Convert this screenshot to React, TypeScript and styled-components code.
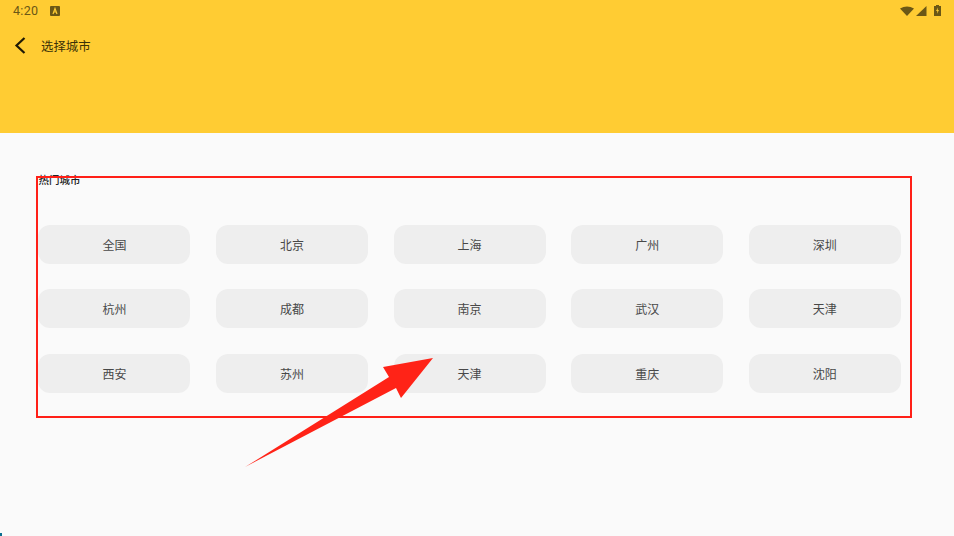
import React from "react";
import styled, { createGlobalStyle } from "styled-components";

const GlobalStyle = createGlobalStyle`
  html, body {
    margin: 0;
    padding: 0;
    background-color: #fafafa;
    font-family: "Noto Sans CJK SC", "Roboto", sans-serif;
  }
`;

const StyledPage = styled("div")`
  position: relative;
  width: 954px;
  height: 536px;
  overflow: hidden;
  background-color: #fafafa;
`;
const StyledHeader = styled("header")`
  height: 133px;
  background-color: #ffcc33;
`;
const StyledStatusBar = styled("div")`
  display: flex;
  align-items: center;
  justify-content: space-between;
  height: 21px;
  padding: 0 13px 0 13px;
  color: #6b5716;
`;
const StyledStatusLeft = styled("div")`
  display: flex;
  align-items: center;
  gap: 12px;
`;
const StyledTime = styled("span")`
  font-family: "Roboto", sans-serif;
  font-size: 12.5px;
  letter-spacing: 0.3px;
`;
const StyledStatusRight = styled("div")`
  display: flex;
  align-items: center;
  gap: 2px;
`;
const StyledBattery = styled("svg")`
  margin-left: 5px;
`;
const StyledToolbar = styled("div")`
  display: flex;
  align-items: center;
  gap: 15px;
  height: 50px;
  padding-left: 14px;
`;
const StyledBack = styled("button")`
  display: flex;
  padding: 0;
  border: 0;
  background: none;
`;
const StyledTitle = styled("span")`
  font-size: 12.4px;
  color: #3a3208;
`;
const StyledSection = styled("section")`
  padding: 39px 53px 0 38.4px;
`;
const StyledSectionTitle = styled("div")`
  height: 52.6px;
  font-size: 10.5px;
  line-height: 16px;
  font-weight: 500;
  color: #222222;
`;
const StyledGrid = styled("div")`
  display: grid;
  grid-template-columns: repeat(5, 152px);
  grid-auto-rows: 39px;
  column-gap: 25.6px;
  row-gap: 25.5px;
`;
const StyledCity = styled("div")`
  display: flex;
  align-items: center;
  justify-content: center;
  border-radius: 12px;
  background-color: #eeeeee;
  font-size: 12px;
  color: #484848;
`;
const StyledHighlight = styled("div")`
  position: absolute;
  left: 36px;
  top: 176px;
  width: 876px;
  height: 242px;
  box-sizing: border-box;
  border: 2px solid #ff1f17;
`;
const StyledArrow = styled("svg")`
  position: absolute;
  left: 0;
  top: 0;
`;
const StyledCorner = styled("div")`
  position: absolute;
  left: 0;
  bottom: 0;
  width: 2px;
  height: 3px;
  background-color: #0b6f8f;
`;

const cities = [
  "全国", "北京", "上海", "广州", "深圳",
  "杭州", "成都", "南京", "武汉", "天津",
  "西安", "苏州", "天津", "重庆", "沈阳",
];

const App: React.FC = () => {
  return (
    <StyledPage>
      <GlobalStyle />
      <StyledHeader>
        <StyledStatusBar>
          <StyledStatusLeft>
            <StyledTime>4:20</StyledTime>
            <svg width="10" height="10" viewBox="0 0 10 10">
              <rect width="10" height="10" rx="1" fill="#6b5716" />
              <path d="M3 8 L5 2.5 L7 8 M3.8 6 H6.2" stroke="#ffcc33" strokeWidth="1.2" fill="none" />
            </svg>
          </StyledStatusLeft>
          <StyledStatusRight>
            <svg width="14" height="10" viewBox="0 0 14 10">
              <path d="M0 2.5 Q7 -1.5 14 2.5 L7 10 Z" fill="#6b5716" />
            </svg>
            <svg width="11" height="10" viewBox="0 0 11 10">
              <path d="M0 10 L10.5 0 V10 Z" fill="#6b5716" />
            </svg>
            <StyledBattery width="7" height="11" viewBox="0 0 7 11">
              <path d="M2 0 H5 V1 H7 V11 H0 V1 H2 Z" fill="#6b5716" />
              <path d="M4 2.5 L2 6 H3.3 L3 8.8 L5 5 H3.7 Z" fill="#ffcc33" />
            </StyledBattery>
          </StyledStatusRight>
        </StyledStatusBar>
        <StyledToolbar>
          <StyledBack aria-label="返回">
            <svg width="12" height="18" viewBox="0 0 12 18">
              <path d="M10.5 1 L2.5 8.5 L10.5 16" stroke="#1f1a05" strokeWidth="2.2" fill="none" />
            </svg>
          </StyledBack>
          <StyledTitle>选择城市</StyledTitle>
        </StyledToolbar>
      </StyledHeader>
      <StyledSection>
        <StyledSectionTitle>热门城市</StyledSectionTitle>
        <StyledGrid>
          {cities.map((city, index) => (
            <StyledCity key={`${index}-${city}`}>{city}</StyledCity>
          ))}
        </StyledGrid>
      </StyledSection>
      <StyledHighlight />
      <StyledArrow width="954" height="536" viewBox="0 0 954 536">
        <path d="M245 467 L389 377 L383 367 L433 358 L401 398 L396 388 Z" fill="#ff2317" />
      </StyledArrow>
      <StyledCorner />
    </StyledPage>
  );
};

export default App;
